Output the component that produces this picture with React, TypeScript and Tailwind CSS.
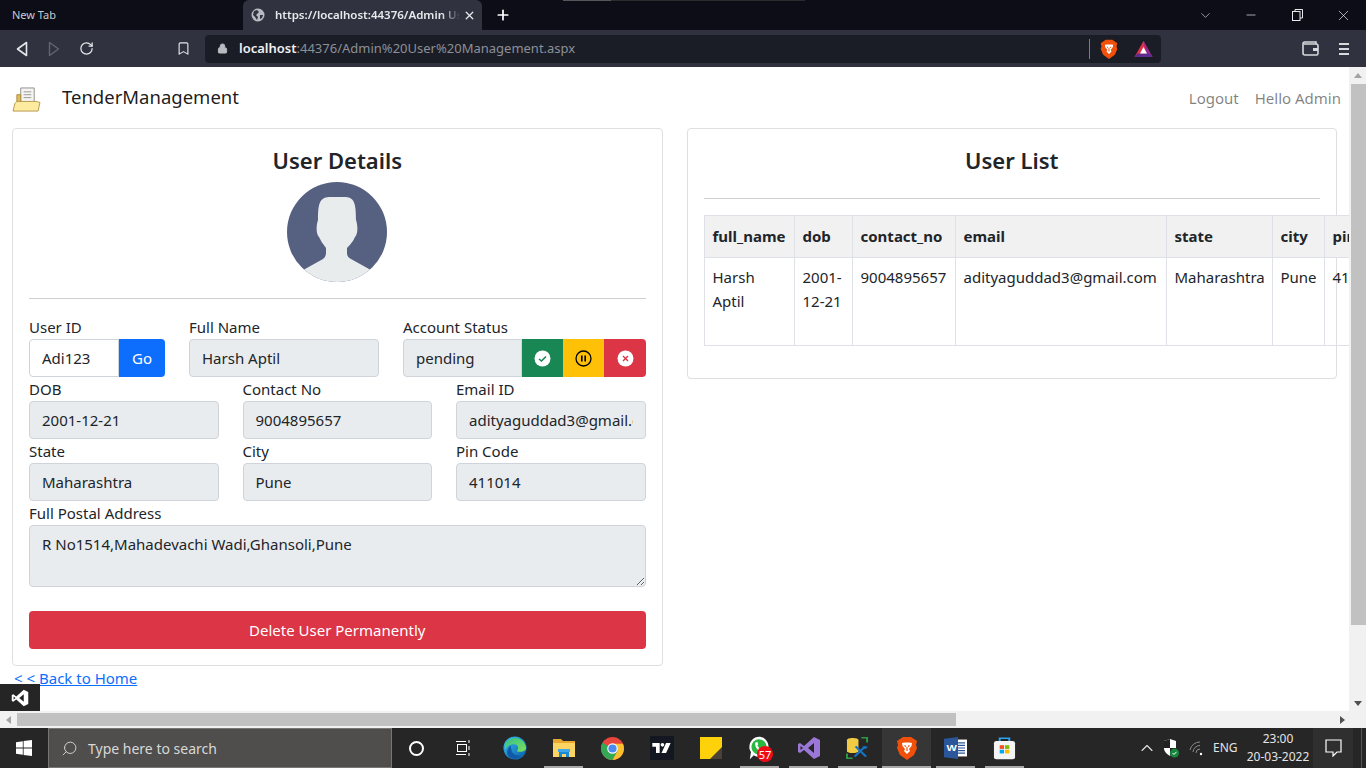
import { Minus, Plus, X, ChevronDown, ChevronUp, RotateCw, Bookmark, Lock, Search } from 'lucide-react'

const fieldClass =
    'h-[38px] w-full min-w-0 border border-[#ced4da] bg-[#e9ecef] px-3 text-[#212529] outline-none'

function Field({ label, value }: { label: string; value: string }) {
    return (
        <div className="min-w-0">
            <label className="block h-6 leading-6 text-[#212529]">{label}</label>
            <input readOnly value={value} className={`${fieldClass} rounded` } />
        </div>
    )
}

function BraveIcon({ size = 20 }: { size?: number }) {
    return (
        <svg width={size} height={size} viewBox="0 0 24 24">
            <path d="M5 3 L8 1 H16 L19 3 L22 5 L21 9 L22 12 L19 19 L12 24 L5 19 L2 12 L3 9 L2 5 Z" fill="#f1500a" />
            <path d="M7 7 L10 6.5 H14 L17 7 L16.5 10 L14 13 L15 15 L12 18 L9 15 L10 13 L7.5 10 Z" fill="#fff" />
            <path d="M9.5 9.5 L11 10.5 M14.5 9.5 L13 10.5" stroke="#f1500a" strokeWidth="1.2" />
            <path d="M12 11 V15" stroke="#f1500a" strokeWidth="1.2" />
        </svg>
    )
}

function BatIcon() {
    return (
        <svg width="19" height="18" viewBox="0 0 19 18">
            <path d="M9.5 1 L18.5 17 H0.5 Z" fill="#e0314b" />
            <path d="M9.5 1 L18.5 17 H13 Z" fill="#8d2a8f" />
            <path d="M0.5 17 L3.5 13.5 H15.5 L18.5 17 Z" fill="#5e2b91" />
            <path d="M9.5 7 L13 13.5 H6 Z" fill="#fff" />
        </svg>
    )
}

function FolderLogo() {
    return (
        <svg width="29" height="26" viewBox="0 0 30 27" className="shrink-0">
            <path d="M9 1 H23 V18 H9 Z" fill="#f4f4f2" stroke="#8f8f88" />
            <path d="M12 5 H20 M12 8 H20 M12 11 H20" stroke="#9a9a94" />
            <path d="M5 8 H9 V16 H5 Z" fill="#e3bd5a" stroke="#a88a3b" />
            <path d="M5 15 H25 L29 16 L27 25 H1 L3 17 Z" fill="#fdeb9f" stroke="#b59a4c" />
        </svg>
    )
}

function VsIcon({ color = '#fff', size = 18 }: { color?: string; size?: number }) {
    return (
        <svg width={size} height={size} viewBox="0 0 24 24">
            <path d="M17 1 L23 4 V20 L17 23 L7 14 L3 17 L1 16 V8 L3 7 L7 10 Z M17 7 L11 12 L17 17 Z M3.5 10 V14 L6 12 Z" fill={color} fillRule="evenodd" />
        </svg>
    )
}

function EdgeIcon() {
    return (
        <svg width="24" height="24" viewBox="0 0 26 26">
            <defs>
                <linearGradient id="edgeA" x1="0" y1="0" x2="1" y2="1">
                    <stop offset="0" stopColor="#35c1f1" />
                    <stop offset="1" stopColor="#0c59a4" />
                </linearGradient>
                <linearGradient id="edgeB" x1="0" y1="0" x2="1" y2="1">
                    <stop offset="0" stopColor="#33bf8c" />
                    <stop offset="1" stopColor="#7fe05a" />
                </linearGradient>
            </defs>
            <circle cx="13" cy="13" r="12.5" fill="url(#edgeA)" />
            <path d="M2 9 C5 1 21 -2 25 12 C25.5 17 19 18 15 16.5 C18 13 16 9 12 9 C7 9 4 11 2 15 Z" fill="url(#edgeB)" />
            <path d="M9 14 C9 19 14 22 20 21 C17 25 11 26 7 23 C3 20 4 13 9 10 C8 11.5 8.5 13 9 14 Z" fill="#0f5ba8" />
        </svg>
    )
}

function ExplorerIcon() {
    return (
        <svg width="22" height="18" viewBox="0 0 22 18">
            <path d="M0 0 H8 L10 2 H22 V18 H0 Z" fill="#e8a92e" />
            <path d="M0 4 H22 V18 H0 Z" fill="#fcd462" />
            <path d="M6 13 H16 V18 H13 V15 H9 V18 H6 Z" fill="#1a88d8" />
            <path d="M5 10 H17 V13 H5 Z" fill="#3fa7ea" />
        </svg>
    )
}

function ChromeIcon() {
    return (
        <svg width="23" height="23" viewBox="0 0 24 24">
            <circle cx="12" cy="12" r="12" fill="#e8453c" />
            <path d="M12 12 L1.6 6 A12 12 0 0 0 12 24 L18 13.5 Z" fill="#34a853" />
            <path d="M12 7 H22.9 A12 12 0 0 1 12 24 L17.5 14 Z" fill="#fbc02d" />
            <circle cx="12" cy="12" r="5.5" fill="#fff" />
            <circle cx="12" cy="12" r="4.3" fill="#4a8bf0" />
        </svg>
    )
}

function TradingViewIcon() {
    return (
        <div className="flex h-6 w-6 items-center justify-center bg-[#131722]">
            <svg width="19" height="11" viewBox="0 0 20 12">
                <path d="M0 0 H8 V11 H4 V4 H0 Z" fill="#fff" />
                <circle cx="11" cy="2" r="2" fill="#fff" />
                <path d="M15 0 H20 L15 11 H10 Z" fill="#fff" />
            </svg>
        </div>
    )
}

function StickyIcon() {
    return (
        <svg width="22" height="22" viewBox="0 0 22 22">
            <rect width="22" height="22" fill="#fdd20a" />
            <path d="M10 22 L22 10 V22 Z" fill="#4a4236" />
        </svg>
    )
}

function WhatsappIcon() {
    return (
        <div className="relative h-6 w-[25px]">
            <svg width="24" height="24" viewBox="0 0 25 30">
                <path d="M12.5 1 C19 1 24.5 6.5 24.5 14 C24.5 21 19 26 12.5 26 C10.5 26 8 25.5 6 24 L1 29 L2.5 20 C1 18 0.5 16 0.5 14 C0.5 6.5 6 1 12.5 1 Z" fill="#fff" />
                <circle cx="12.5" cy="13.5" r="9.5" fill="#2bb741" />
                <path d="M8 8 C6.5 13 11 19 17 19.5 L18.5 16.5 L15.5 15 L14.5 16 C12.5 15 11 13.5 10.5 11.5 L11.5 10.5 L10.5 7.5 Z" fill="#fff" />
            </svg>
            <span className="absolute bottom-[-2px] right-[-1px] flex h-4 w-4 items-center justify-center rounded-full bg-[#ee0d15] text-[11px] leading-none text-white">
                57
            </span>
        </div>
    )
}

function SsmsIcon() {
    return (
        <svg width="23" height="22" viewBox="0 0 24 28" preserveAspectRatio="none">
            <path d="M1 4 C1 0.5 13 0.5 13 4 V18 C13 21 1 21 1 18 Z" fill="#f2cb45" />
            <path d="M16 1 H22 V7 M1 21 V27 H7" stroke="#2f9a45" strokeWidth="2" fill="none" />
            <path d="M9 25 L20 12 M10 12 L21 25" stroke="#1573c4" strokeWidth="2.4" />
            <path d="M17 12 H23 L21 15 H19 Z" fill="#1573c4" />
        </svg>
    )
}

function WordIcon() {
    return (
        <svg width="23" height="22" viewBox="0 0 23 26" preserveAspectRatio="none">
            <rect x="8" y="3" width="15" height="20" fill="#fff" />
            <path d="M13 7 H21 M13 10 H21 M13 13 H21 M13 16 H21 M13 19 H21" stroke="#2b579a" strokeWidth="1.4" />
            <path d="M0 2 L14 0 V26 L0 24 Z" fill="#2b579a" />
            <text x="2.5" y="17" fill="#fff" fontSize="11" fontWeight="700" fontFamily="Liberation Sans, sans-serif">W</text>
        </svg>
    )
}

function StoreIcon() {
    return (
        <svg width="23" height="23" viewBox="0 0 24 28" preserveAspectRatio="none">
            <path d="M7 6 V1.5 H17 V6" stroke="#2aa4f4" strokeWidth="2" fill="none" />
            <rect x="1" y="5" width="22" height="22" rx="2.5" fill="#f4f4f4" />
            <rect x="7" y="10" width="4.5" height="4.5" fill="#f25022" />
            <rect x="12.5" y="10" width="4.5" height="4.5" fill="#7fba00" />
            <rect x="7" y="15.5" width="4.5" height="4.5" fill="#00a4ef" />
            <rect x="12.5" y="15.5" width="4.5" height="4.5" fill="#ffb900" />
        </svg>
    )
}

const taskbarApps = [
    { id: 'edge', icon: <EdgeIcon />, open: false },
    { id: 'explorer', icon: <ExplorerIcon />, open: true },
    { id: 'chrome', icon: <ChromeIcon />, open: false },
    { id: 'tradingview', icon: <TradingViewIcon />, open: false },
    { id: 'sticky', icon: <StickyIcon />, open: false },
    { id: 'whatsapp', icon: <WhatsappIcon />, open: true },
    { id: 'vs', icon: <VsIcon color="#9b78d8" size={24} />, open: true },
    { id: 'ssms', icon: <SsmsIcon />, open: true },
    { id: 'brave', icon: <BraveIcon size={24} />, open: true, active: true },
    { id: 'word', icon: <WordIcon />, open: true },
    { id: 'store', icon: <StoreIcon />, open: true },
]

const tableRow = ['Harsh Aptil', '2001-12-21', '9004895657', 'adityaguddad3@gmail.com', 'Maharashtra', 'Pune', '411014']
const tableHead = ['full_name', 'dob', 'contact_no', 'email', 'state', 'city', 'pin_code']

export default function App() {
    return (
        <div className="flex h-screen w-[1366px] flex-col overflow-hidden bg-white font-['Noto_Sans',sans-serif] text-[15px]">
            {/* tab strip */}
            <div className="relative flex h-[30px] shrink-0 items-center bg-[#0c0d17] text-[11px] text-[#c9cbd1]">
                <div className="absolute left-[563px] top-0 h-px w-[48px] bg-[#55555a]" />
                <div className="absolute left-[611px] top-0 h-px w-[194px] bg-[#2b2b2e]" />
                <span className="ml-3 w-[231px]">New Tab</span>
                <div className="flex h-[30px] w-[239px] items-center rounded-t-md bg-[#30333f] pl-[8px] pr-[6px] text-[#e8e9ec]">
                    <svg width="14" height="14" viewBox="0 0 14 14" className="shrink-0">
                        <circle cx="7" cy="7" r="6.5" fill="#b8bac1" />
                        <path d="M3 3 L6 2 L8 4 L5 7 L7 9 L6 12 L4 9 L2 7 Z M9 7 L12 7 L11 10 L9 11 Z" fill="#30333f" />
                    </svg>
                    <span className="ml-[10px] w-[186px] overflow-hidden whitespace-nowrap text-[11.5px] font-semibold [mask-image:linear-gradient(to_right,black_90%,transparent)]">
                        https://localhost:44376/Admin Us
                    </span>
                    <X size={13} strokeWidth={2.4} className="ml-[3px] shrink-0 text-[#e8e9ec]" />
                </div>
                <Plus size={16} strokeWidth={2.6} className="ml-[13px] text-white" />
                <div className="ml-auto flex items-center text-[#e8e9ec]">
                    <div className="flex w-[46px] justify-center">
                        <ChevronDown size={15} strokeWidth={1} />
                    </div>
                    <div className="flex w-[46px] justify-center">
                        <Minus size={14} strokeWidth={1.2} />
                    </div>
                    <div className="flex w-[46px] justify-center">
                        <svg width="11" height="12" viewBox="0 0 11 12" fill="none" stroke="currentColor">
                            <rect x="0.5" y="2.5" width="7.5" height="9" />
                            <path d="M3 2.5 V0.5 H10.5 V9 H8" />
                        </svg>
                    </div>
                    <div className="flex w-[46px] justify-center">
                        <X size={17} strokeWidth={1} />
                    </div>
                </div>
            </div>

            {/* address bar */}
            <div className="flex h-[37px] shrink-0 items-center bg-[#30333f] text-[#d8d9dd]">
                <div className="flex w-[44px] justify-center">
                    <svg width="12" height="16" viewBox="0 0 12 16" fill="none" stroke="#e6e7ea" strokeWidth="1.6">
                        <path d="M10.5 1.5 V14.5 L1.5 8 Z" strokeLinejoin="round" />
                    </svg>
                </div>
                <div className="flex w-[20px] justify-center">
                    <svg width="12" height="16" viewBox="0 0 12 16" fill="none" stroke="#62656f" strokeWidth="1.4">
                        <path d="M1.5 1.5 V14.5 L10.5 8 Z" strokeLinejoin="round" />
                    </svg>
                </div>
                <div className="ml-[12px] flex w-[20px] justify-center">
                    <RotateCw size={15} strokeWidth={2} className="text-[#e6e7ea]" />
                </div>
                <div className="ml-[77px] flex w-[20px] justify-center">
                    <Bookmark size={15} strokeWidth={1.8} className="text-[#e6e7ea]" />
                </div>
                <div className="ml-[12px] flex h-[28px] w-[956px] items-center rounded bg-[#1a1d25] pl-[12px] text-[13px]">
                    <Lock size={11} fill="#b9bbc1" strokeWidth={2} className="text-[#b9bbc1]" />
                    <span className="ml-[11px] w-[850px] whitespace-nowrap">
                        <span className="font-semibold text-[#f0f0f2]">localhost</span>
                        <span className="text-[#8c8f98]">:44376/Admin%20User%20Management.aspx</span>
                    </span>
                    <div className="h-[20px] w-px bg-[#7b7d85]" />
                    <div className="ml-[9px] flex w-[20px] justify-center">
                        <BraveIcon size={20} />
                    </div>
                    <div className="ml-[15px]">
                        <BatIcon />
                    </div>
                </div>
                <div className="ml-[141px] flex items-center">
                    <svg width="17" height="15" viewBox="0 0 17 15" fill="none" stroke="#d8d9dd" strokeWidth="1.6">
                        <path d="M14 3 V1 H3 C1.5 1 1 2 1 3 V12 C1 13.5 2 14 3 14 H15 C16 14 16 13 16 12 V5 C16 3.5 15 3 14 3 H2" />
                        <rect x="11" y="7" width="5" height="3" fill="#d8d9dd" stroke="none" />
                    </svg>
                    <div className="ml-[20px] flex flex-col gap-[3px]">
                        <div className="h-[2px] w-[10px] bg-[#d8d9dd]" />
                        <div className="h-[2px] w-[10px] bg-[#d8d9dd]" />
                        <div className="h-[2px] w-[10px] bg-[#d8d9dd]" />
                    </div>
                </div>
            </div>

            {/* page */}
            <div className="flex min-h-0 flex-1">
                <main className="relative min-w-0 flex-1 overflow-hidden text-[#212529]">
                    <nav className="flex h-[61px] items-start justify-between px-3">
                        <div className="flex items-center pt-[16px]">
                            <FolderLogo />
                            <span className="mb-[6px] ml-[21px] text-[18.5px] text-black/90">TenderManagement</span>
                        </div>
                        <div className="flex gap-4 pt-[20px] text-black/50">
                            <span>Logout</span>
                            <span className="mr-[-4px]">Hello Admin</span>
                        </div>
                    </nav>

                    <div className="grid grid-cols-2 items-start gap-6 px-3">
                        <div>
                            <section className="rounded border border-[#dfdfe0] p-4">
                                <h2 className="h-[37px] text-center text-[22px] font-semibold leading-[31px]">User Details</h2>
                                <svg viewBox="0 0 100 100" className="mx-auto block h-[100px] w-[100px] rounded-full">
                                    <rect width="100" height="100" fill="#566081" />
                                    <path
                                        d="M18 87 L36 77 Q39 75 39 71 L39 66 Q34 60 32 55 C29 52 29 44 31 38 C31 20 33 15 44 15 L57 15 C67 15 69 20 69 38 C71 44 71 52 68 55 Q66 60 60 66 L60 71 Q60 75 64 77 L82 87 L100 100 L0 100 Z"
                                        fill="#e8eced"
                                    />
                                </svg>
                                <hr className="my-4 border-[#cfcfcf]" />

                                <div className="grid grid-cols-[136px_190px_243px] gap-x-6">
                                    <div>
                                        <label className="block h-6 leading-6">User ID</label>
                                        <div className="flex">
                                            <input readOnly value="Adi123" className="h-[38px] w-[90px] rounded-l border border-[#ced4da] bg-white px-3 outline-none" />
                                            <button className="h-[38px] w-[46px] rounded-r bg-[#0d6efd] text-white">Go</button>
                                        </div>
                                    </div>
                                    <Field label="Full Name" value="Harsh Aptil" />
                                    <div>
                                        <label className="block h-6 leading-6">Account Status</label>
                                        <div className="flex">
                                            <input readOnly value="pending" className={`${fieldClass} rounded-l`} />
                                            <button className="flex h-[38px] w-[41px] shrink-0 items-center justify-center bg-[#198754]">
                                                <svg width="17" height="17" viewBox="0 0 17 17" fill="none">
                                                    <circle cx="8.5" cy="8.5" r="8" fill="#fff" />
                                                    <path d="M5 9 L7.5 11 L12 6.5" stroke="#198754" strokeWidth="1.6" />
                                                </svg>
                                            </button>
                                            <button className="flex h-[38px] w-[41px] shrink-0 items-center justify-center bg-[#ffc107]">
                                                <svg width="17" height="17" viewBox="0 0 17 17" fill="none" stroke="#000">
                                                    <circle cx="8.5" cy="8.5" r="7.5" strokeWidth="1.3" />
                                                    <path d="M6.8 5.5 V11.5 M10.2 5.5 V11.5" strokeWidth="1.6" />
                                                </svg>
                                            </button>
                                            <button className="flex h-[38px] w-[42px] shrink-0 items-center justify-center rounded-r bg-[#dc3545]">
                                                <svg width="17" height="17" viewBox="0 0 17 17" fill="none">
                                                    <circle cx="8.5" cy="8.5" r="8" fill="#fff" />
                                                    <path d="M6 6 L11 11 M11 6 L6 11" stroke="#dc3545" strokeWidth="1.4" />
                                                </svg>
                                            </button>
                                        </div>
                                    </div>
                                </div>

                                <div className="grid grid-cols-3 gap-x-6">
                                    <Field label="DOB" value="2001-12-21" />
                                    <Field label="Contact No" value="9004895657" />
                                    <Field label="Email ID" value="adityaguddad3@gmail.com" />
                                    <Field label="State" value="Maharashtra" />
                                    <Field label="City" value="Pune" />
                                    <Field label="Pin Code" value="411014" />
                                </div>

                                <label className="block h-6 leading-6">Full Postal Address</label>
                                <textarea
                                    readOnly
                                    value="R No1514,Mahadevachi Wadi,Ghansoli,Pune"
                                    className="block h-[62px] w-full rounded border border-[#ced4da] bg-[#e9ecef] px-3 py-[6px] leading-6 outline-none"
                                />

                                <button className="mt-6 h-[38px] w-full rounded bg-[#dc3545] text-white">
                                    Delete User Permanently
                                </button>
                            </section>
                            <div className="ml-[2px] leading-6">
                                <a href="#" className="text-[#0d6efd]">
                                    {'< < '}
                                    <span className="underline">Back to Home</span>
                                </a>
                            </div>
                        </div>

                        <section className="rounded border border-[#dfdfe0] p-4">
                            <h2 className="h-[53px] text-center text-[22px] font-semibold leading-[31px]">User List</h2>
                            <hr className="mb-4 border-[#cfcfcf]" />
                            <table className="mb-4 w-[700px] table-fixed border-collapse">
                                <colgroup>
                                    <col className="w-[90px]" />
                                    <col className="w-[58px]" />
                                    <col className="w-[103px]" />
                                    <col className="w-[211px]" />
                                    <col className="w-[106px]" />
                                    <col className="w-[52px]" />
                                    <col className="w-[80px]" />
                                </colgroup>
                                <thead>
                                    <tr className="h-[42px] bg-[#f1f1f2]">
                                        {tableHead.map((name) => (
                                            <th key={name} className="border border-[#dee2e6] px-2 text-left font-bold whitespace-nowrap overflow-hidden">
                                                {name}
                                            </th>
                                        ))}
                                    </tr>
                                </thead>
                                <tbody>
                                    <tr className="h-[88px]">
                                        {tableRow.map((cell) => (
                                            <td key={cell} className="border border-[#dee2e6] px-2 pb-2 pt-[7px] align-top leading-6">
                                                {cell}
                                            </td>
                                        ))}
                                    </tr>
                                </tbody>
                            </table>
                        </section>
                    </div>

                    <div className="absolute bottom-0 left-0 flex h-[27px] w-10 items-center justify-center bg-[#252526]">
                        <VsIcon />
                    </div>
                </main>

                {/* vertical scrollbar */}
                <div className="flex w-[17px] shrink-0 flex-col items-center bg-[#f1f1f1]">
                    <div className="mt-[6px] h-0 w-0 border-x-[4px] border-b-[5px] border-x-transparent border-b-[#a3a3a3]" />
                    <div className="ml-[2px] mt-[6px] h-[541px] w-[15px] bg-[#c1c1c1]" />
                    <div className="mb-[5px] mt-auto h-0 w-0 border-x-[4px] border-t-[5px] border-x-transparent border-t-[#505050]" />
                </div>
            </div>

            {/* horizontal scrollbar */}
            <div className="flex h-[17px] shrink-0 items-center bg-[#f1f1f1]">
                <div className="ml-[6px] h-0 w-0 border-y-[4px] border-r-[5px] border-y-transparent border-r-[#a3a3a3]" />
                <div className="ml-[6px] h-[13px] w-[939px] bg-[#c1c1c1]" />
                <div className="ml-auto mr-[21px] h-0 w-0 border-y-[4px] border-l-[5px] border-y-transparent border-l-[#505050]" />
            </div>

            {/* taskbar */}
            <div className="flex h-10 shrink-0 items-center bg-[#262626] text-[#e4e4e4]">
                <div className="flex w-[48px] shrink-0 justify-center">
                    <svg width="16" height="16" viewBox="0 0 16 16" fill="#fff">
                        <path d="M0 2.2 L6.8 1.2 V7.6 H0 Z M7.6 1.1 L16 0 V7.6 H7.6 Z M0 8.4 H6.8 V14.8 L0 13.8 Z M7.6 8.4 H16 V16 L7.6 14.9 Z" />
                    </svg>
                </div>
                <div className="flex h-10 w-[344px] shrink-0 items-center border border-[#777] bg-[#4f4e4c] pl-[12px] text-[14px] text-[#d8d8d8]">
                    <Search size={17} strokeWidth={1.3} className="-scale-x-100" />
                    <span className="ml-[10px]">Type here to search</span>
                </div>
                <div className="flex w-[48px] shrink-0 justify-center">
                    <div className="h-[15px] w-[15px] rounded-full border-2 border-white" />
                </div>
                <div className="flex w-[48px] shrink-0 justify-center">
                    <svg width="16" height="18" viewBox="0 0 16 18" fill="none" stroke="#fff">
                        <rect x="1.5" y="5.5" width="9" height="7" />
                        <path d="M0 2.5 H10 M0 15.5 H10 M13 1 V4 M13 7 V11 M13 14 V17" />
                    </svg>
                </div>
                <div className="ml-[2px] flex shrink-0">
                    {taskbarApps.map((app) => (
                        <div
                            key={app.id}
                            className={`relative flex h-10 w-[49px] shrink-0 items-center justify-center ${app.active ? 'bg-[#363636]' : ''}`}
                        >
                            {app.icon}
                            {app.open ? (
                                <div className={`absolute bottom-0 h-[2px] bg-[#a8a8a8] ${app.active ? 'inset-x-0' : 'inset-x-[5px]'}`} />
                            ) : null}
                        </div>
                    ))}
                </div>
                <div className="ml-[106px] flex w-[24px] shrink-0 justify-center">
                    <ChevronUp size={20} strokeWidth={1.3} />
                </div>
                <div className="flex w-[24px] shrink-0 justify-center">
                    <svg width="16" height="19" viewBox="0 0 16 19">
                        <path d="M7 0 L13 2 V9 C13 13 10 15 7 17 C4 15 1 13 1 9 V2 Z" fill="#fff" />
                        <path d="M7 0 V9 H1 V2 Z M7 9 H13 C13 13 10 15 7 17 Z" fill="#222" />
                        <circle cx="11.5" cy="14" r="4.5" fill="#16863f" />
                        <path d="M9.5 14 L11 15.5 L13.5 12.8" stroke="#fff" fill="none" />
                    </svg>
                </div>
                <div className="ml-[2px] flex w-[24px] shrink-0 justify-center">
                    <svg width="16" height="15" viewBox="0 0 16 15" fill="none" stroke="#8c8c8c">
                        <path d="M1 9 A10 10 0 0 1 11 1 M4 11 A7 7 0 0 1 11 4.5 M7 12 A4 4 0 0 1 11 8" />
                        <circle cx="12" cy="13" r="1.2" fill="#fff" stroke="none" />
                    </svg>
                </div>
                <span className="ml-[4px] w-[28px] shrink-0 text-[12px]">ENG</span>
                <div className="ml-[5px] flex w-[64px] shrink-0 flex-col items-center text-[12px] leading-[18px]">
                    <span>23:00</span>
                    <span className="whitespace-nowrap">20-03-2022</span>
                </div>
                <div className="ml-[3px] flex h-10 w-[40px] shrink-0 items-center justify-center bg-[#2f2f2f]">
                    <svg width="17" height="18" viewBox="0 0 17 18" fill="none" stroke="#fff" strokeWidth="1.2">
                        <path d="M1 1 H16 V13 H12 L8 17 V13 H1 Z" />
                    </svg>
                </div>
                <div className="ml-[8px] h-10 w-px shrink-0 bg-[#555]" />
            </div>
        </div>
    )
}
